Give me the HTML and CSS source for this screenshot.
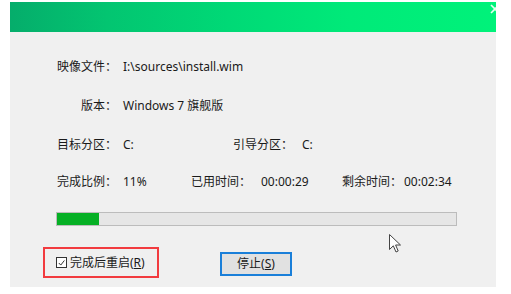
FILE: index.html
```html
<!DOCTYPE html>
<html lang="zh">
<head>
<meta charset="utf-8">
<title>安装</title>
<link rel="stylesheet" href="styles.css">
</head>
<body>
<div class="dialog">
  <div class="titlebar"><svg class="close" width="10" height="10" viewBox="0 0 10 10"><path d="M1 1 L9 9 M9 1 L1 9" stroke="#e6fff0" stroke-width="1.6"/></svg></div>
  <div class="content">
    <div class="row r1">
      <span class="label">映像文件：</span><span class="value">I:\sources\install.wim</span>
    </div>
    <div class="row r2">
      <span class="label">版本：</span><span class="value">Windows 7 旗舰版</span>
    </div>
    <div class="row r3">
      <span class="label">目标分区：</span><span class="value v-short">C:</span>
      <span class="label2">引导分区：</span><span class="value">C:</span>
    </div>
    <div class="row r4">
      <span class="label">完成比例：</span><span class="value v-pct">11%</span>
      <span class="label3">已用时间：</span><span class="value v-time">00:00:29</span>
      <span class="label4">剩余时间：</span><span class="value">00:02:34</span>
    </div>
    <div class="progress"><div class="fill" style="width:42px"></div></div>
    <div class="footer">
      <div class="highlight">
        <span class="checkbox"><svg width="10" height="10" viewBox="0 0 10 10"><path d="M2 5 L4.2 7.3 L8.2 2.2" fill="none" stroke="#333" stroke-width="1.1"/></svg></span>
        <span class="cblabel">完成后重启(<u>R</u>)</span>
      </div>
      <button class="btn">停止(<u>S</u>)</button>
    </div>
  </div>
</div>
<svg class="cursor" width="13" height="20" viewBox="0 0 13 20"><path d="M0.5 0.5 L0.5 15.5 L4.3 11.8 L7 18 L9.2 17 L6.6 11 L11.5 11 Z" fill="#fff" stroke="#444" stroke-width="1" stroke-linejoin="round"/></svg>
</body>
</html>
```

FILE: styles.css
```css
html, body {
  margin: 0;
  padding: 0;
  background: #ffffff;
}
body {
  font-family: "Noto Sans", "Noto Sans CJK SC", sans-serif;
  font-size: 12px;
  color: #1a1a1a;
  position: relative;
  width: 511px;
  height: 294px;
  overflow: hidden;
}
.dialog {
  margin: 2px 0 0 10px;
  width: 486px;
  height: 285px;
  background: #f0f0f0;
}
.titlebar {
  height: 30px;
  background: linear-gradient(90deg, #05ad6b 0%, #03c571 20%, #00d976 45%, #00ea79 70%, #00f27a 100%);
  position: relative;
  overflow: hidden;
}
.close {
  position: absolute;
  right: -4px;
  top: 2px;
}
.content {
  padding: 27px 0 0 46px;
}
.row {
  display: flex;
  align-items: center;
  height: 16px;
  line-height: 16px;
  white-space: nowrap;
}
.r2, .r3 { margin-top: 23px; }
.r4 { margin-top: 21px; }
.label {
  width: 61px;
  text-align: right;
}
.value {
  margin-left: 6px;
}
.v-short { width: 110px; }
.label2 { width: 63px; }
.v-pct { width: 68px; }
.label3 { width: 64px; }
.v-time { width: 81px; margin-left: 6px; }
.label4 { width: 56px; }
.progress {
  margin-top: 22px;
  width: 399px;
  height: 12px;
  border: 1px solid #bcbcbc;
  background: #e6e6e6;
}
.fill {
  height: 12px;
  background: #06b025;
}
.footer {
  display: flex;
  align-items: flex-start;
  margin-top: 21px;
  margin-left: -13px;
}
.highlight {
  box-sizing: border-box;
  width: 116px;
  height: 31px;
  border: 2px solid #f23b3f;
  display: flex;
  align-items: center;
  padding-left: 11px;
}
.checkbox {
  box-sizing: border-box;
  width: 11px;
  height: 11px;
  border: 1px solid #333;
  background: #fff;
  display: flex;
  align-items: center;
  justify-content: center;
}
.checkbox svg { display: block; }
.cblabel {
  margin-left: 3px;
  line-height: 16px;
}
.btn {
  margin: 5px 0 0 61px;
  box-sizing: border-box;
  width: 72px;
  height: 24px;
  border: 2px solid #1a7fd9;
  background: #e1e1e1;
  font-family: "Noto Sans", "Noto Sans CJK SC", sans-serif;
  font-size: 12px;
  color: #1a1a1a;
  padding: 0;
  line-height: 18px;
}
.cursor {
  position: absolute;
  left: 389px;
  top: 234px;
}
```
